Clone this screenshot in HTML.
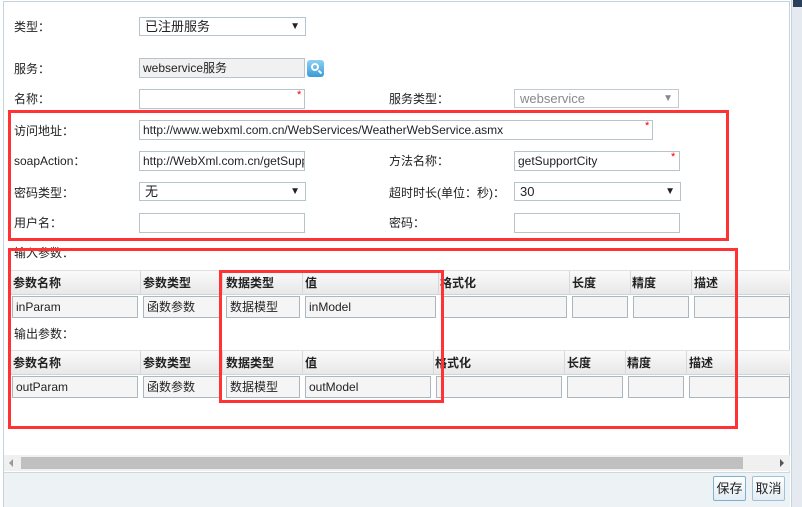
<!DOCTYPE html>
<html><head><meta charset="utf-8"><style>
*{box-sizing:border-box;margin:0;padding:0}
body{width:802px;height:507px;overflow:hidden;background:#fff;font:12px "Liberation Sans","Noto Sans CJK SC",sans-serif;color:#222;position:relative}
.a{position:absolute}
.lbl{position:absolute;font-size:12px;line-height:14px}
.lbl b{font-weight:normal;display:inline-block;width:12px;text-align:center}
.in{position:absolute;border:1px solid #b7c4cc;background:#fff;height:20px;padding-left:3px;line-height:18px;font-size:12px;white-space:nowrap;overflow:hidden}
.sel{position:absolute;border:1px solid #b7c4cc;background:#fff;height:19px;padding-left:5px;line-height:17px;font-size:13px}
.sel:after{content:"▼";position:absolute;right:5px;top:0;font-size:10px}
.st{position:absolute;color:#e00;font-size:11px}
.rb{position:absolute;border:3px solid #f33}
.th{position:absolute;height:25px;background:linear-gradient(#fafafa,#e8e8e8);border-top:1px solid #e0e0e0;border-bottom:1px solid #cfd4d7}
.th span{position:absolute;top:3px;font-weight:bold;font-size:12px}
.th i{position:absolute;top:0;width:1px;height:24px;background:#d8d8d8}
.ti{position:absolute;height:22px;border:1px solid #a9b7be;background:#f5f5f5;padding-left:3px;line-height:20px;font-size:12px}
</style></head><body>
<div class="a" style="left:3px;top:1px;width:787px;height:506px;border-left:1px solid #c5d3dc;border-top:1px solid #c5d3dc;border-right:1px solid #c5d3dc"></div>
<div class="a" style="left:791px;top:0;width:11px;height:507px;background:#e4eaef;border-left:1px solid #c5d3dc"></div>
<div class="a" style="left:793px;top:0;width:9px;height:7px;background:#2a3f5a"></div>

<div class="lbl" style="left:14px;top:20px">类型<b>：</b></div>
<div class="sel" style="left:139px;top:17px;width:167px">已注册服务</div>
<div class="lbl" style="left:14px;top:62px">服务<b>：</b></div>
<div class="in" style="left:139px;top:58px;width:166px;background:#f1f1f1">webservice服务</div>
<div class="a" style="left:307px;top:60px;width:17px;height:17px;border-radius:3px;background:linear-gradient(#8fd0f5,#3a9ad8)"><div class="a" style="left:4px;top:3px;width:8px;height:8px;border:2px solid #fff;border-radius:50%"></div><div class="a" style="left:11px;top:11px;width:4px;height:2px;background:#fff;transform:rotate(45deg)"></div></div>
<div class="lbl" style="left:14px;top:92px">名称<b>：</b></div>
<div class="in" style="left:139px;top:89px;width:166px"></div><div class="st" style="left:297px;top:89px">*</div>
<div class="lbl" style="left:389px;top:92px">服务类型<b>：</b></div>
<div class="sel" style="left:514px;top:89px;width:165px;color:#888;border-color:#c0ccd2">webservice</div>

<div class="lbl" style="left:14px;top:124px">访问地址<b>：</b></div>
<div class="in" style="left:139px;top:120px;width:514px">http://www.webxml.com.cn/WebServices/WeatherWebService.asmx</div><div class="st" style="left:645px;top:120px">*</div>
<div class="lbl" style="left:14px;top:154px">soapAction<b>：</b></div>
<div class="in" style="left:139px;top:151px;width:166px">http://WebXml.com.cn/getSupportCity</div>
<div class="lbl" style="left:389px;top:154px">方法名称<b>：</b></div>
<div class="in" style="left:514px;top:151px;width:166px">getSupportCity</div><div class="st" style="left:671px;top:151px">*</div>
<div class="lbl" style="left:14px;top:186px">密码类型<b>：</b></div>
<div class="sel" style="left:139px;top:182px;width:167px">无</div>
<div class="lbl" style="left:389px;top:186px">超时时长(单位<b>：</b>秒)<b>：</b></div>
<div class="sel" style="left:514px;top:182px;width:167px">30</div>
<div class="lbl" style="left:14px;top:216px">用户名<b>：</b></div>
<div class="in" style="left:139px;top:213px;width:166px"></div>
<div class="lbl" style="left:389px;top:216px">密码<b>：</b></div>
<div class="in" style="left:514px;top:213px;width:166px"></div>

<div class="lbl" style="left:14px;top:246px">输入参数<b>：</b></div>
<div class="th" style="left:10px;top:270px;width:780px">
<span style="left:3px">参数名称</span><i style="left:130px"></i><span style="left:133px">参数类型</span><i style="left:212px"></i><span style="left:216px">数据类型</span><i style="left:292px"></i><span style="left:295px">值</span><i style="left:428px"></i><span style="left:430px">格式化</span><i style="left:559px"></i><span style="left:562px">长度</span><i style="left:620px"></i><span style="left:622px">精度</span><i style="left:681px"></i><span style="left:684px">描述</span></div>
<div class="ti" style="left:12px;top:296px;width:126px">inParam</div>
<div class="ti" style="left:143px;top:296px;width:78px">函数参数</div>
<div class="ti" style="left:226px;top:296px;width:74px">数据模型</div>
<div class="ti" style="left:305px;top:296px;width:131px">inModel</div>
<div class="ti" style="left:443px;top:296px;width:124px"></div>
<div class="ti" style="left:572px;top:296px;width:56px"></div>
<div class="ti" style="left:633px;top:296px;width:56px"></div>
<div class="ti" style="left:694px;top:296px;width:96px"></div>

<div class="lbl" style="left:14px;top:327px">输出参数<b>：</b></div>
<div class="th" style="left:10px;top:350px;width:780px">
<span style="left:3px">参数名称</span><i style="left:130px"></i><span style="left:133px">参数类型</span><i style="left:212px"></i><span style="left:216px">数据类型</span><i style="left:292px"></i><span style="left:295px">值</span><i style="left:423px"></i><span style="left:425px">格式化</span><i style="left:554px"></i><span style="left:557px">长度</span><i style="left:615px"></i><span style="left:617px">精度</span><i style="left:676px"></i><span style="left:679px">描述</span></div>
<div class="ti" style="left:12px;top:376px;width:126px">outParam</div>
<div class="ti" style="left:143px;top:376px;width:78px">函数参数</div>
<div class="ti" style="left:226px;top:376px;width:74px">数据模型</div>
<div class="ti" style="left:305px;top:376px;width:126px">outModel</div>
<div class="ti" style="left:436px;top:376px;width:126px"></div>
<div class="ti" style="left:567px;top:376px;width:56px"></div>
<div class="ti" style="left:628px;top:376px;width:56px"></div>
<div class="ti" style="left:689px;top:376px;width:101px"></div>

<div class="rb" style="left:8px;top:110px;width:721px;height:131px"></div>
<div class="rb" style="left:8px;top:248px;width:730px;height:181px"></div>
<div class="rb" style="left:219px;top:270px;width:225px;height:133px"></div>

<div class="a" style="left:4px;top:455px;width:786px;height:16px;background:#f0f0f0"></div>
<div class="a" style="left:21px;top:457px;width:722px;height:12px;background:#c0c0c0"></div>
<div class="a" style="left:9px;top:459px;width:0;height:0;border:4px solid transparent;border-right-color:#999;border-left:0"></div>
<div class="a" style="left:780px;top:459px;width:0;height:0;border:4px solid transparent;border-left-color:#555;border-right:0"></div>
<div class="a" style="left:4px;top:472px;width:786px;height:35px;background:#edf2f5;border-top:1px solid #cdd9e0"></div>
<div class="a" style="left:713px;top:476px;width:33px;height:25px;border:1px solid #7fb0d0;border-radius:2px;background:linear-gradient(#fff,#e2edf4);font-size:13px;text-align:center;line-height:23px">保存</div>
<div class="a" style="left:752px;top:476px;width:33px;height:25px;border:1px solid #9fc0d6;border-radius:2px;background:linear-gradient(#fff,#e2edf4);font-size:13px;text-align:center;line-height:23px">取消</div>
</body></html>
